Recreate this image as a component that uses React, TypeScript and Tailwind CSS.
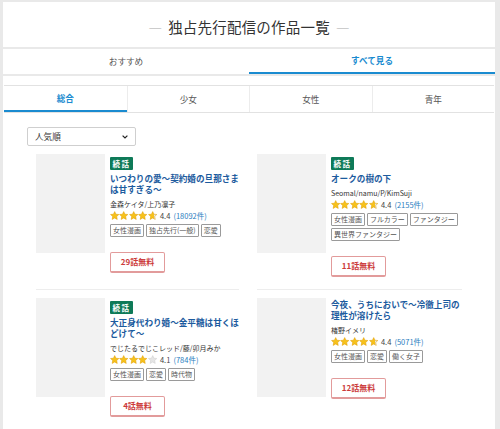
import React from "react";

type Work = {
  title: string;
  author: string;
  rating: number;
  count: string;
  tags: string[];
  free: string;
  badge?: boolean;
};

const works: Work[] = [
  {
    title: "いつわりの愛〜契約婚の旦那さまは甘すぎる〜",
    author: "金森ケイタ/上乃凛子",
    rating: 4.4,
    count: "18092件",
    tags: ["女性漫画", "独占先行(一般)", "恋愛"],
    free: "29話無料",
    badge: true,
  },
  {
    title: "オークの樹の下",
    author: "Seomal/namu/P/KimSuji",
    rating: 4.4,
    count: "2155件",
    tags: ["女性漫画", "フルカラー", "ファンタジー", "異世界ファンタジー"],
    free: "11話無料",
    badge: true,
  },
  {
    title: "大正身代わり婚〜金平糖は甘くほどけて〜",
    author: "でじたるでじこレッド/藤/卯月みか",
    rating: 4.1,
    count: "784件",
    tags: ["女性漫画", "恋愛", "時代物"],
    free: "4話無料",
    badge: true,
  },
  {
    title: "今夜、うちにおいで〜冷徹上司の理性が溶けたら",
    author: "楮野イメリ",
    rating: 4.4,
    count: "5071件",
    tags: ["女性漫画", "恋愛", "働く女子"],
    free: "12話無料",
  },
];

const STAR = "M5 0.6 L6.3 3.4 L9.4 3.7 L7.1 5.8 L7.7 8.9 L5 7.4 L2.3 8.9 L2.9 5.8 L0.6 3.7 L3.7 3.4 Z";

// 星ひとつ（fill は 0〜1）
const Star = ({ fill, id }: { fill: number; id: string }) => (
  <svg width="9.4" height="9" viewBox="0 0 10 9.5">
    <defs>
      <linearGradient id={id}>
        <stop offset={`${fill * 100}%`} stopColor="#f7c21b" />
        <stop offset={`${fill * 100}%`} stopColor="#e6e6e6" />
      </linearGradient>
    </defs>
    <path d={STAR} fill={`url(#${id})`} stroke={fill > 0 ? "#e3a008" : "#cfcfcf"} strokeWidth="0.6" />
  </svg>
);

const Stars = ({ rating, uid }: { rating: number; uid: number }) => {
  const fills = [0, 1, 2, 3, 4].map((i) => {
    const r = rating - i;
    if (r >= 1) return 1;
    if (r <= 0.2) return 0;
    return 0.6;
  });
  return (
    <div className="flex">
      {fills.map((f, i) => (
        <Star key={i} fill={f} id={`s${uid}-${i}`} />
      ))}
    </div>
  );
};

const WorkCard = ({ work, index }: { work: Work; index: number }) => (
  <div className={`flex pb-[12px] ${index >= 2 ? "border-t border-[#ededed] pt-[8px]" : ""}`}>
    <div className="w-[69px] h-[99px] shrink-0 bg-[#f2f2f2]" />
    <div className="ml-[5px] flex-1 min-w-0">
      {work.badge && (
        <div className="mt-[3px] w-[23px] h-[13px] bg-[#0e7a58] text-white text-[7.5px] font-bold flex items-center justify-center tracking-[1.5px] rounded-[1px]">
          続話
        </div>
      )}
      <div className={`${work.badge ? "mt-[3px]" : "mt-[1px]"} text-[8.6px] leading-[11px] font-bold text-[#1c5b9e]`}>
        {work.title}
      </div>
      <div className="mt-[4px] text-[7px] leading-[10px] text-[#333]">{work.author}</div>
      <div className="mt-[1px] flex items-center h-[11px]">
        <Stars rating={work.rating} uid={index} />
        <span className="ml-[3px] text-[7.5px] text-[#444]">{work.rating.toFixed(1)}</span>
        <span className="ml-[3px] text-[7.5px] text-[#2b7ec0]">({work.count})</span>
      </div>
      <div className="mt-[3px] flex flex-wrap gap-x-[2px] gap-y-[2px]">
        {work.tags.map((t) => (
          <span
            key={t}
            className="h-[13px] px-[2px] border border-[#9a9a9a] rounded-[1px] text-[7px] leading-[11px] text-[#555] bg-white"
          >
            {t}
          </span>
        ))}
      </div>
      <div className="mt-[15px] w-[55px] h-[21px] border border-[#e29b9b] border-b-2 rounded-[2px] flex items-center justify-center text-[8px] font-bold text-[#cc3a3a] bg-white">
        {work.free}
      </div>
    </div>
  </div>
);

export default function App() {
  return (
    <div
      className="min-h-screen bg-[#e9e9e9] pl-[3px] pr-[5px] pt-[2px]"
      style={{ fontFamily: '"Noto Sans CJK JP", "Noto Sans", sans-serif' }}
    >
      <div className="h-[45px] pt-[5px] bg-white flex items-center justify-center">
        <span className="text-[#aaa] text-[14px]">―</span>
        <span className="mx-[6px] text-[14.5px] tracking-[0.2px] text-[#333]">独占先行配信の作品一覧</span>
        <span className="text-[#aaa] text-[14px]">―</span>
      </div>
      <div className="mt-[2px] h-[25px] bg-white grid grid-cols-2">
        <div className="flex items-center justify-center text-[8.6px] text-[#555]">おすすめ</div>
        <div className="flex items-center justify-center text-[8.6px] font-bold text-[#1a8bd0] border-b-2 border-[#1a8bd0]">
          すべて見る
        </div>
      </div>
      <div className="mt-[2px] bg-white pt-[9px] pb-[40px]">
        <div className="mx-[1px] h-[28px] grid grid-cols-4 border-y border-[#e2e2e2]">
          {["総合", "少女", "女性", "青年"].map((t, i) => (
            <div
              key={t}
              className={`flex items-center justify-center text-[8.6px] ${
                i === 0
                  ? "font-bold text-[#1a8bd0] border-b-2 border-[#1a8bd0]"
                  : "text-[#555] border-l border-[#ececec]"
              }`}
            >
              {t}
            </div>
          ))}
        </div>
        <div className="mt-[14px] ml-[24px] w-[109px] h-[19px] border border-[#cfcfcf] rounded-[2px] flex items-center justify-between px-[7px]">
          <span className="text-[8.6px] text-[#333]">人気順</span>
          <svg width="6" height="4" viewBox="0 0 6 4">
            <path d="M0.6 0.6 L3 3 L5.4 0.6" fill="none" stroke="#222" strokeWidth="1.2" />
          </svg>
        </div>
        <div className="mt-[8px] ml-[33px] grid grid-cols-[203px_205px] gap-x-[18px]">
          {works.map((w, i) => (
            <WorkCard key={w.title} work={w} index={i} />
          ))}
        </div>
      </div>
    </div>
  );
}
